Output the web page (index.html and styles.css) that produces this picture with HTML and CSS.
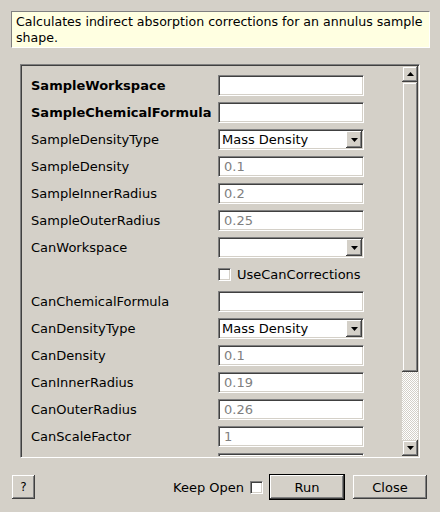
FILE: index.html
```html
<!DOCTYPE html>
<html>
<head>
<meta charset="utf-8">
<link rel="stylesheet" href="styles.css">
</head>
<body>
<div class="dialog">
  <div class="desc">Calculates indirect absorption corrections for an annulus sample shape.</div>

  <div class="frame">
    <div class="viewport">
      <div class="form">
        <div class="label bold">SampleWorkspace</div><div class="field"></div>
        <div class="label bold">SampleChemicalFormula</div><div class="field"></div>
        <div class="label">SampleDensityType</div><div class="combo"><span class="ctext">Mass Density</span><span class="cbtn"><svg width="7" height="4" viewBox="0 0 7 4"><polygon points="0,0 7,0 3.5,4" fill="#000"/></svg></span></div>
        <div class="label">SampleDensity</div><div class="field"><span class="ph">0.1</span></div>
        <div class="label">SampleInnerRadius</div><div class="field"><span class="ph">0.2</span></div>
        <div class="label">SampleOuterRadius</div><div class="field"><span class="ph">0.25</span></div>
        <div class="label">CanWorkspace</div><div class="combo"><span class="ctext"></span><span class="cbtn"><svg width="7" height="4" viewBox="0 0 7 4"><polygon points="0,0 7,0 3.5,4" fill="#000"/></svg></span></div>
        <div class="label"></div><div class="checkrow"><span class="check"></span><span>UseCanCorrections</span></div>
        <div class="label">CanChemicalFormula</div><div class="field"></div>
        <div class="label">CanDensityType</div><div class="combo"><span class="ctext">Mass Density</span><span class="cbtn"><svg width="7" height="4" viewBox="0 0 7 4"><polygon points="0,0 7,0 3.5,4" fill="#000"/></svg></span></div>
        <div class="label">CanDensity</div><div class="field"><span class="ph">0.1</span></div>
        <div class="label">CanInnerRadius</div><div class="field"><span class="ph">0.19</span></div>
        <div class="label">CanOuterRadius</div><div class="field"><span class="ph">0.26</span></div>
        <div class="label">CanScaleFactor</div><div class="field"><span class="ph">1</span></div>
        <div class="label"></div><div class="field"></div>
      </div>
    </div>
    <div class="scrollbar">
      <div class="sbtn"><svg width="7" height="4" viewBox="0 0 7 4"><polygon points="3.5,0 7,4 0,4" fill="#000"/></svg></div>
      <div class="thumb"></div>
      <div class="track"></div>
      <div class="sbtn"><svg width="7" height="4" viewBox="0 0 7 4"><polygon points="0,0 7,0 3.5,4" fill="#000"/></svg></div>
    </div>
  </div>

  <div class="bottom">
    <div class="btn help">?</div>
    <div class="spacer"></div>
    <span class="keep">Keep Open</span>
    <span class="check keepbox"></span>
    <div class="default"><div class="btn run">Run</div></div>
    <div class="btn close">Close</div>
  </div>
</div>
</body>
</html>
```
FILE: styles.css
```css
html, body {
  margin: 0;
  padding: 0;
  background: #d4d0c8;
  font-family: "DejaVu Sans", "Liberation Sans", sans-serif;
  font-size: 13px;
  color: #000;
  width: 440px;
  height: 512px;
  overflow: hidden;
}

.dialog {
  padding: 11px 0 0 11px;
}

.desc {
  box-sizing: border-box;
  width: 419px;
  height: 37px;
  background: #ffffe1;
  border: 1px solid;
  border-color: #808080 #ffffff #ffffff #808080;
  padding: 2px 0 1px 4px;
  font-size: 12.6px;
  line-height: 16px;
}

.frame {
  box-sizing: border-box;
  margin: 16px 0 0 9px;
  width: 400px;
  height: 394px;
  border: 1px solid;
  border-color: #808080 #ffffff #ffffff #808080;
  box-shadow: inset 1px 1px 0 #404040, inset -1px -1px 0 #d4d0c8;
  padding: 1px;
  display: flex;
}

.viewport {
  flex: 1;
  overflow: hidden;
}

.form {
  padding: 9px 0 0 9px;
  display: grid;
  grid-template-columns: 187px 146px;
  grid-auto-rows: 21px;
  row-gap: 6px;
  align-items: center;
}

.label {
  white-space: nowrap;
  line-height: 20px;
}

.bold {
  font-weight: bold;
}

.field, .combo {
  box-sizing: border-box;
  height: 21px;
  width: 146px;
  background: #fff;
  border: 1px solid;
  border-color: #808080 #ffffff #ffffff #808080;
  box-shadow: inset 1px 1px 0 #404040, inset -1px -1px 0 #d4d0c8;
  line-height: 19px;
  padding: 0 4px 0 5px;
}

.ph {
  color: #808080;
}

.combo {
  display: flex;
  padding: 1px 1px 1px 3px;
  line-height: 17px;
}

.ctext {
  flex: 1;
}

.cbtn {
  box-sizing: border-box;
  width: 16px;
  height: 17px;
  background: #d4d0c8;
  box-shadow: inset -1px -1px 0 #404040, inset 1px 1px 0 #ffffff, inset -2px -2px 0 #808080;
  display: flex;
  align-items: center;
  justify-content: center;
}

.checkrow {
  display: flex;
  align-items: center;
  gap: 6px;
  height: 21px;
}

.check {
  box-sizing: border-box;
  display: inline-block;
  width: 13px;
  height: 13px;
  background: #fff;
  border: 1px solid;
  border-color: #808080 #ffffff #ffffff #808080;
  box-shadow: inset 1px 1px 0 #404040, inset -1px -1px 0 #d4d0c8;
}

.scrollbar {
  width: 16px;
  display: flex;
  flex-direction: column;
}

.sbtn, .thumb {
  box-sizing: border-box;
  background: #d4d0c8;
  box-shadow: inset -1px -1px 0 #404040, inset 1px 1px 0 #d4d0c8, inset -2px -2px 0 #808080, inset 2px 2px 0 #ffffff;
}

.sbtn {
  height: 16px;
  display: flex;
  align-items: center;
  justify-content: center;
}

.thumb {
  height: 290px;
}

.track {
  flex: 1;
  background: repeating-conic-gradient(#ffffff 0 25%, #d4d0c8 0 50%) 0 0 / 2px 2px;
}

.bottom {
  margin-top: 16px;
  padding: 0 13px 0 1px;
  display: flex;
  align-items: center;
  height: 26px;
}

.btn {
  box-sizing: border-box;
  height: 24px;
  background: #d4d0c8;
  box-shadow: inset -1px -1px 0 #404040, inset 1px 1px 0 #ffffff, inset -2px -2px 0 #808080;
  display: flex;
  align-items: center;
  justify-content: center;
}

.help {
  width: 23px;
  font-size: 12px;
}

.spacer {
  flex: 1;
}

.keep {
  margin-right: 6px;
}

.keepbox {
  margin-right: 6px;
}

.default {
  box-sizing: border-box;
  width: 76px;
  height: 26px;
  border: 1px solid #000;
  margin-right: 8px;
}

.run {
  width: 74px;
}

.close {
  width: 74px;
}
```
